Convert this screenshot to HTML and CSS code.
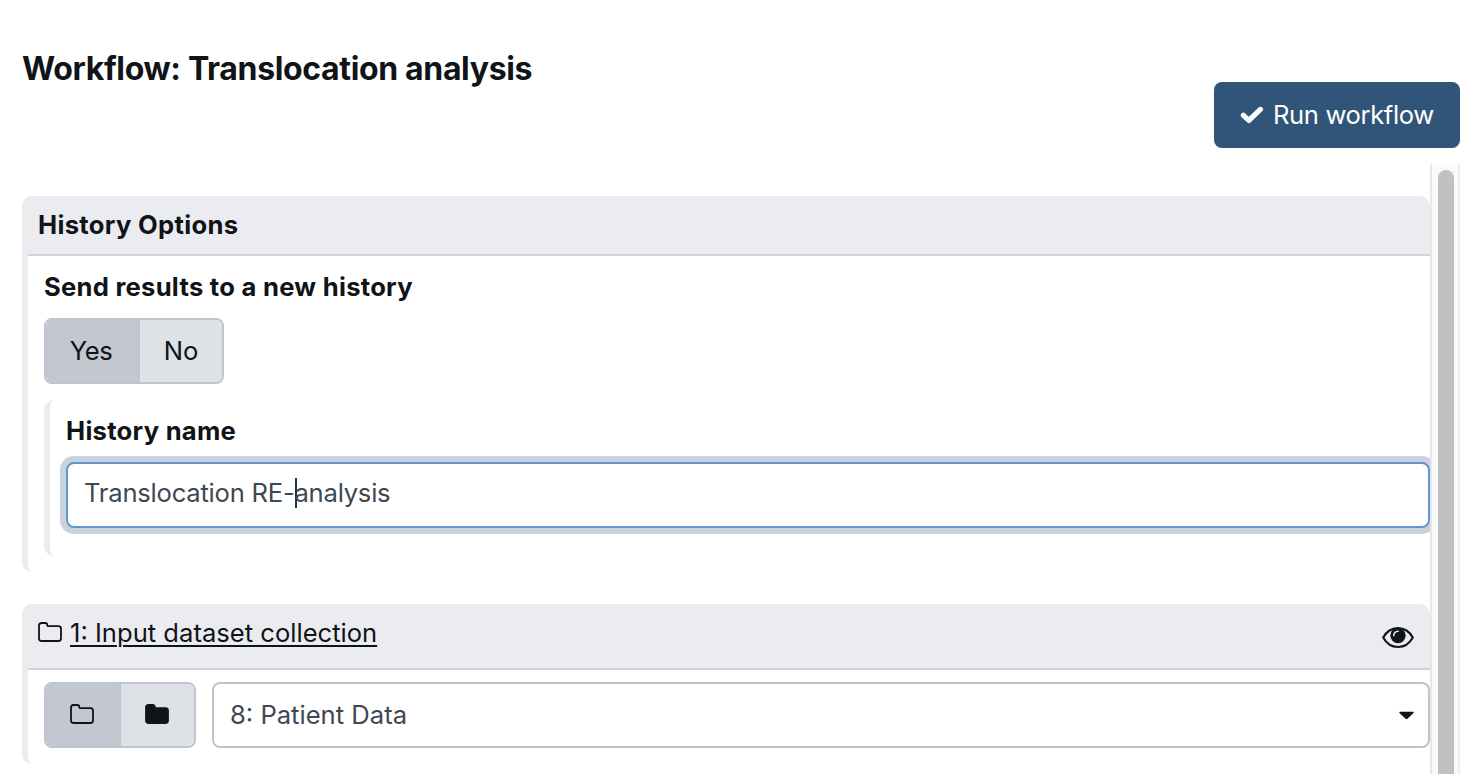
FILE: index.html
```html
<!DOCTYPE html>
<html lang="en">
<head>
<meta charset="utf-8">
<title>Workflow: Translocation analysis</title>
<link rel="stylesheet" href="styles.css">
</head>
<body>
<div class="page">
  <header class="page-header">
    <h1 class="title"><span class="t-title">Workflow: Translocation analysis</span></h1>
    <button class="run-button" type="button">
      <svg class="icon-check" viewBox="0 0 24 20"><path d="M3.4 10.3L8.9 15.4L20.4 4.4"/></svg>
      <span class="t-run">Run workflow</span>
    </button>
  </header>
  <div class="scroll-area">
    <main class="content">
      <section class="card history-card">
        <div class="card-header"><span class="t-options">History Options</span></div>
        <div class="card-body">
          <div class="label send-label"><span class="t-send">Send results to a new history</span></div>
          <div class="toggle-group">
            <button class="toggle active yes" type="button"><span>Yes</span></button>
            <button class="toggle no" type="button"><span>No</span></button>
          </div>
          <div class="nested">
            <div class="label name-label"><span class="t-name">History name</span></div>
            <div class="text-input"><span class="t-value">Translocation RE-<i class="caret"></i>analysis</span></div>
          </div>
        </div>
      </section>
      <section class="card input-card">
        <div class="card-header">
          <svg class="icon-folder" viewBox="0 0 24 20"><path d="M1 3.5Q1 1 3.5 1H7Q9.3 1 9.3 3.2Q9.3 4.2 10.5 4.2H20.5Q23 4.2 23 6.7V16.5Q23 19 20.5 19H3.5Q1 19 1 16.5Z"/></svg>
          <a class="collection-link"><span class="t-link">1: Input dataset collection</span></a>
          <svg class="icon-eye" viewBox="0 0 32 22"><path class="eye-outline" d="M1.2 10.6C8-2 24-2 30.8 10.6C24 23.2 8 23.2 1.2 10.6Z"/><circle cx="16" cy="8.5" r="7.7"/><path class="eye-glint" d="M11.8 8.8Q11.8 4.4 16.2 4.2"/></svg>
        </div>
        <div class="card-body select-row">
          <div class="toggle-group">
            <button class="toggle active folder-single" type="button"><svg class="icon-folder" viewBox="0 0 24 20"><path d="M1 3.5Q1 1 3.5 1H7Q9.3 1 9.3 3.2Q9.3 4.2 10.5 4.2H20.5Q23 4.2 23 6.7V16.5Q23 19 20.5 19H3.5Q1 19 1 16.5Z"/></svg></button>
            <button class="toggle folder-multi" type="button"><svg class="icon-folder filled" viewBox="0 0 24 20"><path d="M1 3.5Q1 1 3.5 1H7.5Q9.8 1 9.8 3.2Q9.8 4.2 11 4.2H20.5Q23 4.2 23 6.7V16.5Q23 19 20.5 19H3.5Q1 19 1 16.5Z"/></svg></button>
          </div>
          <div class="select"><span class="t-select">8: Patient Data</span><svg class="icon-arrow" viewBox="0 0 16 8"><path d="M.8 0H15.2Q16 .5 15.5 1.2L9 7.4Q8 8.4 7 7.4L.5 1.2Q0 .5 .8 0Z"/></svg></div>
        </div>
      </section>
    </main>
    <div class="scrollbar"><div class="thumb"></div></div>
  </div>
</div>
</body>
</html>
```
FILE: styles.css
```css
* { box-sizing: border-box; }
body {
  margin: 0;
  background: #fff;
  color: #101417;
  font: 400 25.6px/38px Inter, "Liberation Sans", sans-serif;
}
button { font: inherit; color: inherit; margin: 0; padding: 0; border: 0; }
svg { display: block; flex: none; }
.page { height: 774px; padding: 0 20px 0 22px; overflow: hidden; display: flex; flex-direction: column; }
.page-header { height: 164px; flex: none; display: flex; justify-content: space-between; align-items: flex-start; }
.title { margin: 50px 0 0; font-size: 32px; line-height: 38px; font-weight: 700; letter-spacing: -0.35px; white-space: nowrap; }
.run-button {
  width: 246px; height: 66px; margin-top: 82px; padding-left: 26px;
  display: flex; align-items: center; gap: 9px;
  background: #315479; color: #fff; border-radius: 8px; white-space: nowrap;
}
.t-run { letter-spacing: -0.37px; }
.icon-check { width: 24px; height: 20px; fill: none; stroke: #fff; stroke-width: 5.2; stroke-linecap: round; stroke-linejoin: round; }
.scroll-area { flex: 1; display: flex; min-height: 0; }
.content { flex: 1; min-width: 0; padding-top: 32px; overflow: hidden; }
.card { border-left: 6px solid #ebecf0; border-radius: 10px; }
.history-card { height: 376px; margin-bottom: 32px; }
.input-card { height: 160px; }
.card-header {
  background: #ebecf0; border-bottom: 2px solid #d0d2d9; border-top-right-radius: 10px;
  padding: 0 16px 0 10px; display: flex; align-items: flex-start; white-space: nowrap;
}
.history-card .card-header { height: 60px; padding-top: 10px; font-weight: 700; letter-spacing: 0.31px; }
.input-card .card-header { height: 66px; padding-top: 10px; }
.card-body { padding-left: 16px; }
.label { font-weight: 700; line-height: 38px; letter-spacing: 0.27px; white-space: nowrap; }
.send-label { padding-top: 12px; height: 62px; }
.toggle-group { display: flex; width: max-content; border: 2px solid #bdc5d0; border-radius: 8px; overflow: hidden; height: 66px; flex: none; }
.toggle { display: flex; align-items: center; justify-content: center; background: #dee1e6; }
.toggle.active { background: #c3c7cf; border-right: 2px solid #bdc5d0; }
.yes { width: 94px; padding-right: 2px; letter-spacing: -0.5px; }
.no { width: 82px; }
.nested { margin-top: 16px; height: 156px; border-left: 6px solid #ebecf0; border-radius: 10px; padding: 12px 0 0 16px; }
.name-label { height: 50px; }
.text-input {
  height: 66px; border: 2px solid #6495cb; border-radius: 8px; background: #fff; color: #3e4852;
  box-shadow: 0 0 0 6px #cad2dc; padding: 10px 0 0 16px; white-space: nowrap; line-height: 38px; letter-spacing: -0.23px;
}
.caret { display: inline-block; width: 2px; height: 30px; margin: 0 -3px 0 1px; background: #26303a; vertical-align: -6px; }
.input-card .card-header .icon-folder { margin-top: 8px; }
.icon-folder { width: 24px; height: 20px; fill: none; stroke: #101417; stroke-width: 1.8; }
.icon-folder.filled { fill: #101417; }
.collection-link { margin-left: 8px; text-decoration: underline; text-decoration-thickness: 2px; text-underline-offset: 3px; }
.icon-eye { width: 32px; height: 22px; margin: 13px 0 0 auto; fill: #101417; }
.eye-outline { fill: none; stroke: #101417; stroke-width: 2.1; stroke-linejoin: round; }
.eye-glint { fill: none; stroke: #ebecf0; stroke-width: 1.5; stroke-linecap: round; }
.select-row { display: flex; gap: 16px; padding-top: 12px; }
.folder-single { width: 75px; padding: 0 1px 2px 0; }
.folder-multi { width: 73px; padding: 0 1px 2px 0; }
.select {
  flex: 1; height: 66px; border: 2px solid #bdc3d0; border-radius: 8px; padding: 0 14px 0 16px;
  display: flex; align-items: center; justify-content: space-between; color: #3e4852; white-space: nowrap;
}
.icon-arrow { width: 15px; height: 9px; fill: #101417; }
.scrollbar { width: 30px; flex: none; background: #fafafa; border-left: 2px solid #e7e7e7; border-right: 2px solid #ededed; padding: 6px 4px 0 6px; }
.thumb { width: 16px; height: 640px; border-radius: 8px; background: #c1c1c1; }
```
